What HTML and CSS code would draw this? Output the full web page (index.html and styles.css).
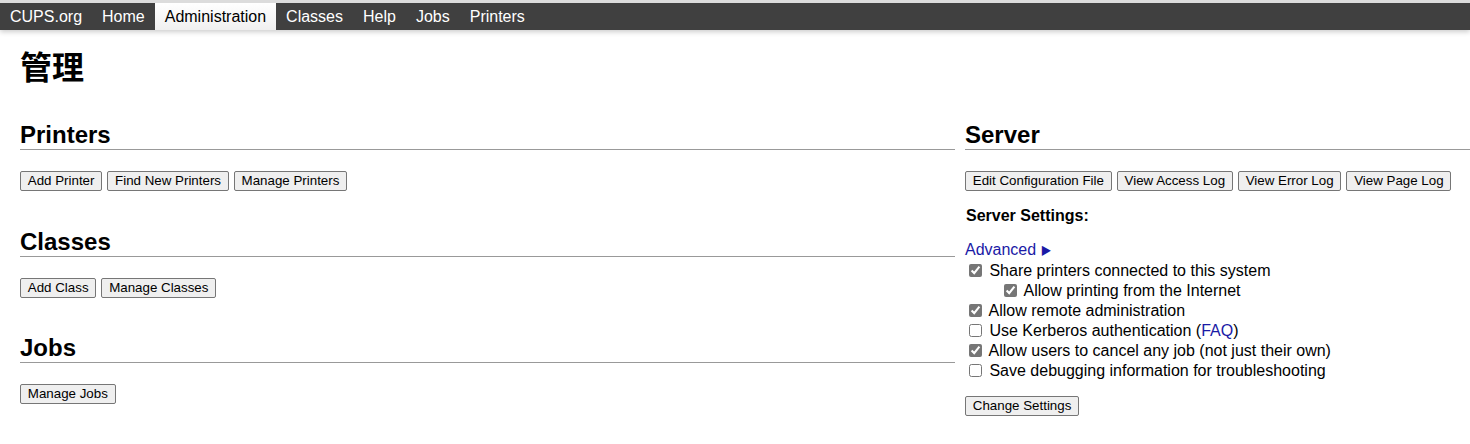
FILE: index.html
```html
<!DOCTYPE html>
<html lang="zh">
<head>
<meta charset="utf-8">
<title>管理 - CUPS</title>
<link rel="stylesheet" href="styles.css">
</head>
<body>
<nav class="header">
  <a class="nav-item" href="#">CUPS.org</a>
  <a class="nav-item" href="#">Home</a>
  <a class="nav-item active" href="#">Administration</a>
  <a class="nav-item" href="#">Classes</a>
  <a class="nav-item" href="#">Help</a>
  <a class="nav-item" href="#">Jobs</a>
  <a class="nav-item" href="#">Printers</a>
</nav>
<main class="page">
  <h1 class="title">管理</h1>
  <div class="columns">
    <div class="col">
      <section class="sec first">
        <h2 class="sec-title">Printers</h2>
        <div class="btns">
          <button class="btn">Add Printer</button>
          <button class="btn">Find New Printers</button>
          <button class="btn">Manage Printers</button>
        </div>
      </section>
      <section class="sec">
        <h2 class="sec-title">Classes</h2>
        <div class="btns">
          <button class="btn">Add Class</button>
          <button class="btn">Manage Classes</button>
        </div>
      </section>
      <section class="sec">
        <h2 class="sec-title">Jobs</h2>
        <div class="btns">
          <button class="btn">Manage Jobs</button>
        </div>
      </section>
    </div>
    <div class="col">
      <section class="sec first">
        <h2 class="sec-title">Server</h2>
        <div class="btns">
          <button class="btn">Edit Configuration File</button>
          <button class="btn">View Access Log</button>
          <button class="btn">View Error Log</button>
          <button class="btn">View Page Log</button>
        </div>
        <p class="settings-title">Server Settings:</p>
        <div class="settings">
          <a class="link adv" href="#">Advanced <span class="tri">&#9654;</span></a>
          <label class="opt"><input type="checkbox" checked> Share printers connected to this system</label>
          <label class="opt sub"><input type="checkbox" checked> Allow printing from the Internet</label>
          <label class="opt"><input type="checkbox" checked> Allow remote administration</label>
          <label class="opt"><input type="checkbox"> Use Kerberos authentication (<a class="link" href="#">FAQ</a>)</label>
          <label class="opt"><input type="checkbox" checked> Allow users to cancel any job (not just their own)</label>
          <label class="opt"><input type="checkbox"> Save debugging information for troubleshooting</label>
        </div>
        <div class="btns change">
          <button class="btn">Change Settings</button>
        </div>
      </section>
    </div>
  </div>
</main>
</body>
</html>
```

FILE: styles.css
```css
* { box-sizing: border-box; }

html, body {
  margin: 0;
  padding: 0;
  background: #ffffff;
  color: #000000;
  font-family: "Liberation Sans", Arial, "Noto Sans CJK SC", sans-serif;
  font-size: 16px;
  overflow: hidden;
}

.header {
  display: flex;
  height: 30px;
  border-top: 3px solid #dcdcdc;
  background: #404040;
  box-shadow: 0 2px 5px rgba(0, 0, 0, 0.2);
}

.nav-item {
  display: block;
  padding: 0 10px;
  line-height: 27px;
  color: #ffffff;
  text-decoration: none;
  font-size: 16px;
}

.nav-item.active {
  color: #000000;
  background: linear-gradient(#ffffff, #f0f0f0);
}

.page {
  padding-left: 20px;
}

.title {
  margin: 15px 0 0 0;
  height: 40px;
  line-height: 40px;
  font-size: 32px;
  font-weight: bold;
  font-family: "Noto Sans CJK SC", "Liberation Sans", sans-serif;
}

.columns {
  display: grid;
  grid-template-columns: 935px 505px;
  column-gap: 10px;
}

.sec {
  margin-top: 36.5px;
}

.sec.first {
  margin-top: 36px;
}

.sec-title {
  margin: 0;
  font-size: 24px;
  font-weight: bold;
  line-height: 28px;
  border-bottom: 1px solid #999999;
}

.btns {
  display: flex;
  gap: 5px;
  margin-top: 21px;
}

.btn {
  height: 20px;
  padding: 0 6.8px;
  font-family: "Liberation Sans", Arial, sans-serif;
  font-size: 13.333px;
  line-height: 16px;
  color: #000000;
  background: #efefef;
  border: 1px solid #767676;
  border-radius: 2px;
}

.settings-title {
  margin: 15px 0 0 1px;
  line-height: 20px;
  font-weight: bold;
  font-size: 16px;
}

.settings {
  display: flex;
  flex-direction: column;
  margin-top: 13.5px;
}

.link {
  color: #1a1aa6;
  text-decoration: none;
}

.adv {
  line-height: 20px;
}

.tri {
  font-size: 11px;
}

.opt {
  display: block;
  line-height: 20px;
  height: 20px;
}

.opt input {
  width: 13px;
  height: 13px;
  margin: 0 3px 0 4px;
  vertical-align: -1px;
  accent-color: #767676;
}

.opt.sub {
  padding-left: 35px;
}

.btns.change {
  margin-top: 15.5px;
}
```
